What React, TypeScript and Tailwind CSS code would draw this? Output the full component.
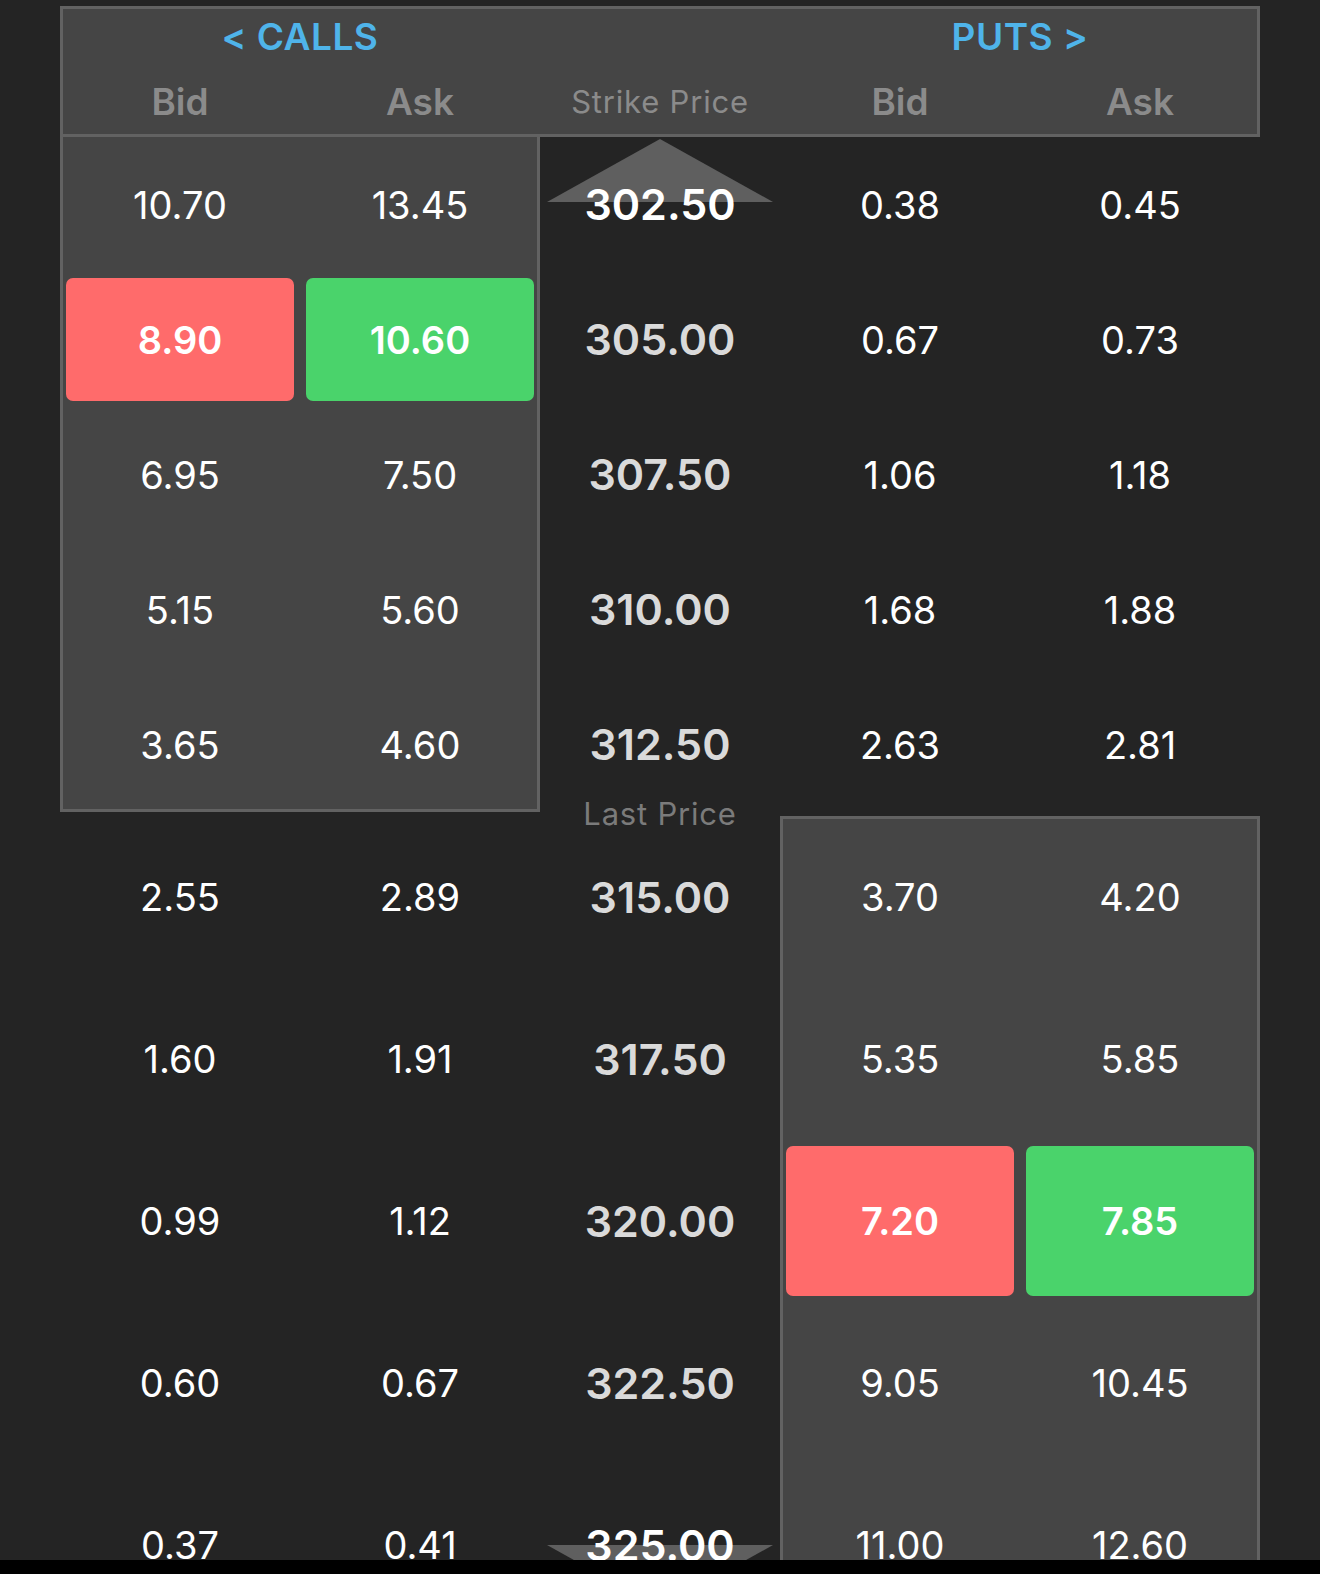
import clsx from "clsx";

// Option chain: calls on the left, strike in the middle, puts on the right.
// Boxed regions mark the in-the-money side; the red/green tiles are the
// currently selected bid/ask pair.

type Tone = "bid" | "ask";

interface Quote {
  v: string;
  tone?: Tone;
}

interface ChainRow {
  callBid: Quote;
  callAsk: Quote;
  strike: string;
  putBid: Quote;
  putAsk: Quote;
}

const q = (v: string, tone?: Tone): Quote => ({ v, tone });

const ROWS: ChainRow[] = [
  { callBid: q("10.70"), callAsk: q("13.45"), strike: "302.50", putBid: q("0.38"), putAsk: q("0.45") },
  { callBid: q("8.90", "bid"), callAsk: q("10.60", "ask"), strike: "305.00", putBid: q("0.67"), putAsk: q("0.73") },
  { callBid: q("6.95"), callAsk: q("7.50"), strike: "307.50", putBid: q("1.06"), putAsk: q("1.18") },
  { callBid: q("5.15"), callAsk: q("5.60"), strike: "310.00", putBid: q("1.68"), putAsk: q("1.88") },
  { callBid: q("3.65"), callAsk: q("4.60"), strike: "312.50", putBid: q("2.63"), putAsk: q("2.81") },
  { callBid: q("2.55"), callAsk: q("2.89"), strike: "315.00", putBid: q("3.70"), putAsk: q("4.20") },
  { callBid: q("1.60"), callAsk: q("1.91"), strike: "317.50", putBid: q("5.35"), putAsk: q("5.85") },
  { callBid: q("0.99"), callAsk: q("1.12"), strike: "320.00", putBid: q("7.20", "bid"), putAsk: q("7.85", "ask") },
  { callBid: q("0.60"), callAsk: q("0.67"), strike: "322.50", putBid: q("9.05"), putAsk: q("10.45") },
  { callBid: q("0.37"), callAsk: q("0.41"), strike: "325.00", putBid: q("11.00"), putAsk: q("12.60") },
];

// Rows above the last price are shorter than the ones below it.
const UPPER = ROWS.slice(0, 5);
const LOWER = ROWS.slice(5);

const BOX = "bg-[#454545]";

function QuoteCell({ quote }: { quote: Quote }) {
  if (quote.tone) {
    return (
      <div className="flex h-full p-[6px]">
        <div
          className={clsx(
            "flex flex-1 items-center justify-center rounded-[7px] text-[38px] font-semibold leading-none text-white",
            quote.tone === "bid" ? "bg-[#ff6b6b]" : "bg-[#4ad36b]",
          )}
        >
          {quote.v}
        </div>
      </div>
    );
  }
  return (
    <div className="flex h-full items-center justify-center text-[38px] leading-none text-white">
      {quote.v}
    </div>
  );
}

function Arrow({ dir }: { dir: "up" | "down" }) {
  return (
    <svg
      width="226"
      height="63"
      viewBox="0 0 226 63"
      className={clsx(
        "absolute left-[7px]",
        dir === "up" ? "top-[2px]" : "top-[81px]",
      )}
    >
      <polygon
        points={dir === "up" ? "0,63 113,0 226,63" : "0,0 226,0 113,63"}
        fill="#5f5f5f"
      />
    </svg>
  );
}

function StrikeCell({ value, arrow }: { value: string; arrow?: "up" | "down" }) {
  return (
    <div className="relative flex h-full items-center justify-center">
      {arrow && <Arrow dir={arrow} />}
      <span
        className={clsx(
          "relative text-[43px] font-semibold leading-none",
          arrow ? "text-white" : "text-[#dadada]",
        )}
      >
        {value}
      </span>
    </div>
  );
}

function Header() {
  return (
    <div className={clsx("mt-[6px] h-[131px] shadow-[inset_0_0_0_3px_#626262]", BOX)}>
      <div className="flex h-[60px] items-center">
        <div className="w-[480px] text-center text-[37px] font-semibold leading-none tracking-[0.5px] text-[#4fb4ea]">
          &lt; CALLS
        </div>
        <div className="w-[240px]" />
        <div className="w-[480px] text-center text-[37px] font-semibold leading-none tracking-[0.5px] text-[#4fb4ea]">
          PUTS &gt;
        </div>
      </div>
      <div className="grid h-[71px] grid-cols-5 items-center">
        <div className="text-center text-[37px] font-semibold leading-none text-[#8b8b8b]">Bid</div>
        <div className="text-center text-[37px] font-semibold leading-none text-[#8b8b8b]">Ask</div>
        <div className="text-center text-[31px] leading-none tracking-[0.8px] text-[#8b8b8b]">
          Strike Price
        </div>
        <div className="text-center text-[37px] font-semibold leading-none text-[#8b8b8b]">Bid</div>
        <div className="text-center text-[37px] font-semibold leading-none text-[#8b8b8b]">Ask</div>
      </div>
    </div>
  );
}

export default function App() {
  return (
    <div className="flex h-[1574px] flex-col bg-black font-['Inter','Noto_Sans',sans-serif]">
      <div className="h-[1560px] overflow-hidden bg-[#242424]">
        <div className="ml-[60px] w-[1200px]">
          <Header />

          <div className="flex">
            {/* Calls */}
            <div className="w-[480px]">
              <div
                className={clsx(
                  BOX,
                  "shadow-[inset_3px_0_0_#626262,inset_-3px_0_0_#626262,inset_0_-3px_0_#626262]",
                )}
              >
                {UPPER.map((r) => (
                  <div key={r.strike} className="grid h-[135px] grid-cols-2">
                    <QuoteCell quote={r.callBid} />
                    <QuoteCell quote={r.callAsk} />
                  </div>
                ))}
              </div>
              <div className="mt-[4px]">
                {LOWER.map((r) => (
                  <div key={r.strike} className="grid h-[162px] grid-cols-2">
                    <QuoteCell quote={r.callBid} />
                    <QuoteCell quote={r.callAsk} />
                  </div>
                ))}
              </div>
            </div>

            {/* Strikes */}
            <div className="w-[240px]">
              {UPPER.map((r, i) => (
                <div key={r.strike} className="h-[135px]">
                  <StrikeCell value={r.strike} arrow={i === 0 ? "up" : undefined} />
                </div>
              ))}
              <div className="relative mt-[4px]">
                <div className="absolute inset-x-0 top-[-3px] -translate-y-1/2 text-center text-[31px] leading-none tracking-[0.8px] text-[#7b7b7b]">
                  Last Price
                </div>
                {LOWER.map((r, i) => (
                  <div key={r.strike} className="h-[162px]">
                    <StrikeCell
                      value={r.strike}
                      arrow={i === LOWER.length - 1 ? "down" : undefined}
                    />
                  </div>
                ))}
              </div>
            </div>

            {/* Puts */}
            <div className="w-[480px]">
              {UPPER.map((r) => (
                <div key={r.strike} className="grid h-[135px] grid-cols-2">
                  <QuoteCell quote={r.putBid} />
                  <QuoteCell quote={r.putAsk} />
                </div>
              ))}
              <div className={clsx("mt-[4px] shadow-[inset_0_0_0_3px_#626262]", BOX)}>
                {LOWER.map((r) => (
                  <div key={r.strike} className="grid h-[162px] grid-cols-2">
                    <QuoteCell quote={r.putBid} />
                    <QuoteCell quote={r.putAsk} />
                  </div>
                ))}
              </div>
            </div>
          </div>
        </div>
      </div>
      <div className="h-[14px] bg-black" />
    </div>
  );
}
